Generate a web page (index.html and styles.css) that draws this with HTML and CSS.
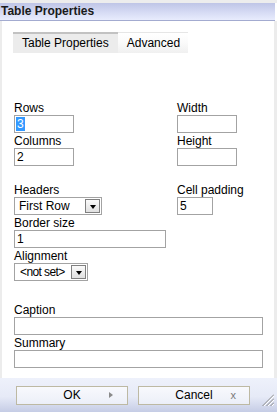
FILE: index.html
```html
<!DOCTYPE html>
<html>
<head>
<meta charset="utf-8">
<link rel="stylesheet" href="styles.css">
</head>
<body>
<div class="dialog">
  <div class="titlebar">Table Properties</div>
  <div class="content">
    <div class="tabs">
      <div class="tab active">Table Properties</div>
      <div class="tab">Advanced</div>
    </div>
    <div class="section sec1">
      <div class="col left">
        <div class="label">Rows</div>
        <div class="input w60"><span class="sel">3</span></div>
        <div class="label">Columns</div>
        <div class="input w60">2</div>
      </div>
      <div class="col right">
        <div class="label">Width</div>
        <div class="input w60"></div>
        <div class="label">Height</div>
        <div class="input w60"></div>
      </div>
    </div>
    <div class="section sec2">
      <div class="col left">
        <div class="label">Headers</div>
        <div class="select w88"><span class="seltext">First Row</span><span class="dd"><span class="tri"></span></span></div>
        <div class="label">Border size</div>
        <div class="input w152">1</div>
        <div class="label">Alignment</div>
        <div class="select w74"><span class="seltext small">&lt;not set&gt;</span><span class="dd"><span class="tri"></span></span></div>
      </div>
      <div class="col right">
        <div class="label">Cell padding</div>
        <div class="input w36">5</div>
      </div>
    </div>
    <div class="section sec3">
      <div class="label">Caption</div>
      <div class="input w249"></div>
      <div class="label">Summary</div>
      <div class="input w249"></div>
    </div>
  </div>
  <div class="footer">
    <div class="btn">OK<span class="ico arrow"></span></div>
    <div class="btn">Cancel<span class="ico x">x</span></div>
    <svg class="grip" width="12" height="12" viewBox="0 0 12 12">
      <g stroke="#8a8a8a" stroke-width="1">
        <line x1="12" y1="0.5" x2="0.5" y2="12"/>
        <line x1="12" y1="4.5" x2="4.5" y2="12"/>
        <line x1="12" y1="8.5" x2="8.5" y2="12"/>
      </g>
      <g stroke="#ffffff" stroke-width="1">
        <line x1="12" y1="2" x2="2" y2="12"/>
        <line x1="12" y1="6" x2="6" y2="12"/>
        <line x1="12" y1="10" x2="10" y2="12"/>
      </g>
    </svg>
  </div>
</div>
</body>
</html>
```
FILE: styles.css
```css
* { box-sizing: border-box; }
html, body { margin: 0; padding: 0; background: #fff; }
body {
  font-family: "Liberation Sans", Arial, sans-serif;
  font-size: 12px;
  color: #000;
}
.dialog {
  width: 277px;
  height: 415px;
  display: flex;
  flex-direction: column;
  background: #fff;
  border-top: 3px solid #ededed;
}
.titlebar {
  width: 275px;
  height: 18px;
  line-height: 17px;
  padding-left: 1px;
  font-weight: bold;
  color: #1a1a1a;
  background: linear-gradient(#bfc5e6, #d6dbf4 55%, #e8ecfd);
  border-bottom: 1px solid #a3abd0;
}
.content {
  flex: 1;
  border-left: 2px solid #ececec;
  border-right: 3px solid #ececec;
  padding-left: 12px;
}
.tabs {
  display: flex;
  margin-top: 11px;
  margin-left: -1px;
}
.tab {
  height: 21px;
  line-height: 18px;
  padding: 1px 8px 0 9px;
  border-top: 1px solid #e6e6e6;
  background: linear-gradient(#ffffff, #fafafa 50%, #f0f0f0);
}
.tab.active {
  border-top: 2px solid #c2c2c2;
  padding-top: 0;
  background: #ececec;
  padding-right: 9px;
}
.section { display: flex; }
.sec1 { margin-top: 47px; }
.sec2 { margin-top: 16px; }
.sec3 { margin-top: 21px; flex-direction: column; }
.col { display: flex; flex-direction: column; }
.col.left { width: 163px; }
.label {
  height: 15px;
  line-height: 15px;
  padding-top: 1px;
}
.input {
  height: 18px;
  border: 1px solid #a3a3a3;
  background: #fff;
  line-height: 16px;
  padding-left: 2px;
}
.w60 { width: 60px; }
.w36 { width: 36px; }
.w152 { width: 152px; }
.w249 { width: 249px; }
.w88 { width: 88px; }
.w74 { width: 74px; }
.sel {
  background: #3399ff;
  color: #fff;
  display: inline-block;
  line-height: 14px;
  padding: 0 1px;
  margin-left: -1px;
}
.select {
  height: 18px;
  border: 1px solid #a3a3a3;
  background: #fff;
  display: flex;
  align-items: center;
  padding: 0 1px 0 4px;
}
.seltext { flex: 1; white-space: nowrap; overflow: hidden; }
.seltext.small { letter-spacing: -0.6px; margin-left: 1px; }
.dd {
  width: 15px;
  height: 14px;
  border: 1px solid #808080;
  background: linear-gradient(#fafafa, #e0e0e0);
  display: flex;
  align-items: center;
  justify-content: center;
}
.tri {
  width: 0; height: 0;
  border-left: 3.5px solid transparent;
  border-right: 3.5px solid transparent;
  border-top: 4px solid #000;
  margin-top: 1px;
}
.footer {
  height: 34px;
  margin-bottom: 3px;
  background: linear-gradient(#eef1fb, #e6eaf7 55%, #c5cce5);
  display: flex;
  align-items: flex-start;
  padding: 8px 3px 0 16px;
  gap: 10px;
}
.btn {
  position: relative;
  width: 112px;
  height: 19px;
  line-height: 17px;
  text-align: center;
  border: 1px solid #bdb9a3;
  background: linear-gradient(#f8f9fd, #eceff8);
}
.ico { position: absolute; top: 0; }
.ico.arrow {
  right: 14px;
  top: 5px;
  width: 0; height: 0;
  border-top: 3.5px solid transparent;
  border-bottom: 3.5px solid transparent;
  border-left: 4px solid #8a8a8a;
}
.ico.x {
  right: 13px;
  color: #7a7a7a;
  font-size: 11px;
}
.grip {
  margin-left: auto;
  margin-top: 8px;
}
```
